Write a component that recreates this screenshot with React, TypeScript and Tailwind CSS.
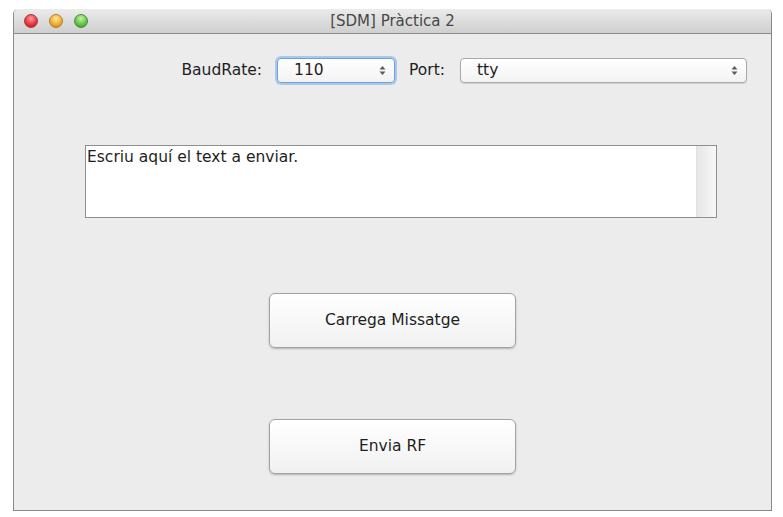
import React from "react";

const font = { fontFamily: '"DejaVu Sans", "Liberation Sans", sans-serif' };

const Arrows = () => (
  <svg width="7" height="11" viewBox="0 0 7 11" className="shrink-0">
    <path d="M3.5 1 L6.5 4.5 L0.5 4.5 Z" fill="#5a5a5a" />
    <path d="M3.5 10 L6.5 6.5 L0.5 6.5 Z" fill="#5a5a5a" />
  </svg>
);

const Select = ({ value, width, focused }: { value: string; width: string; focused?: boolean }) => (
  <div
    className={`${width} h-[25px] flex items-center justify-between pl-[16px] pr-[8px] rounded-[4px] bg-gradient-to-b from-white to-[#f3f3f3] text-[15.5px] text-[#1e1e1e] ${
      focused
        ? "border border-[#6f9fdc] shadow-[0_0_0_2px_#a9c8ee]"
        : "border border-[#a9a9a9] shadow-[0_1px_1px_rgba(0,0,0,0.12)]"
    }`}
  >
    <span>{value}</span>
    <Arrows />
  </div>
);

const Button = ({ label }: { label: string }) => (
  <button className="w-[247px] h-[55px] rounded-[6px] border border-[#a3a3a3] bg-gradient-to-b from-white to-[#f1f1f1] shadow-[0_1px_2px_rgba(0,0,0,0.25)] text-[15.5px] text-[#1e1e1e]">
    {label}
  </button>
);

export default function App() {
  return (
    <div className="w-[783px] h-[517px] bg-white pt-[9px] pl-[13px]" style={font}>
      <div className="w-[759px] h-[502px] flex flex-col border-x border-b border-[#8a8a8a] rounded-t-[5px] overflow-hidden">
        {/* title bar */}
        <div className="h-[25px] flex items-center bg-gradient-to-b from-[#ebebeb] to-[#cfcfcf] border-b border-[#8c8c8c] relative">
          <div className="flex gap-[11px] pl-[10px]">
            <span className="w-[14px] h-[14px] rounded-full bg-[radial-gradient(circle_at_50%_30%,#ff9a9a,#e5303a_60%,#b01a20)] border border-[#a23a3a]" />
            <span className="w-[14px] h-[14px] rounded-full bg-[radial-gradient(circle_at_50%_30%,#ffe59a,#f2a72e_60%,#c07a10)] border border-[#a8802e]" />
            <span className="w-[14px] h-[14px] rounded-full bg-[radial-gradient(circle_at_50%_30%,#c8f5a0,#5cc04a_60%,#2f8a22)] border border-[#4a8a3a]" />
          </div>
          <div className="absolute inset-0 flex items-center justify-center text-[15px] text-[#474747] pointer-events-none">
            [SDM] Pràctica 2
          </div>
        </div>

        {/* content */}
        <div className="flex-1 bg-[#ececec] flex flex-col">
          <div className="flex items-center justify-end pr-[24px] pt-[24px] text-[15.5px] text-[#1e1e1e]">
            <span className="mr-[15px]">BaudRate:</span>
            <Select value="110" width="w-[118px]" focused />
            <span className="ml-[14px] mr-[15px]">Port:</span>
            <Select value="tty" width="w-[287px]" />
          </div>

          <div className="ml-[71px] mt-[62px] w-[632px] h-[73px] flex border border-[#8e8e8e] bg-white">
            <div className="flex-1 px-[1px] pt-[2px] text-[15.5px] text-[#1e1e1e] leading-[18px]">
              Escriu aquí el text a enviar.
            </div>
            <div className="w-[20px] bg-gradient-to-r from-[#e6e6e6] to-[#f8f8f8] border-l border-[#e2e2e2]" />
          </div>

          <div className="flex flex-col items-center mt-[75px] gap-[71px]">
            <Button label="Carrega Missatge" />
            <Button label="Envia RF" />
          </div>
        </div>
      </div>
    </div>
  );
}
